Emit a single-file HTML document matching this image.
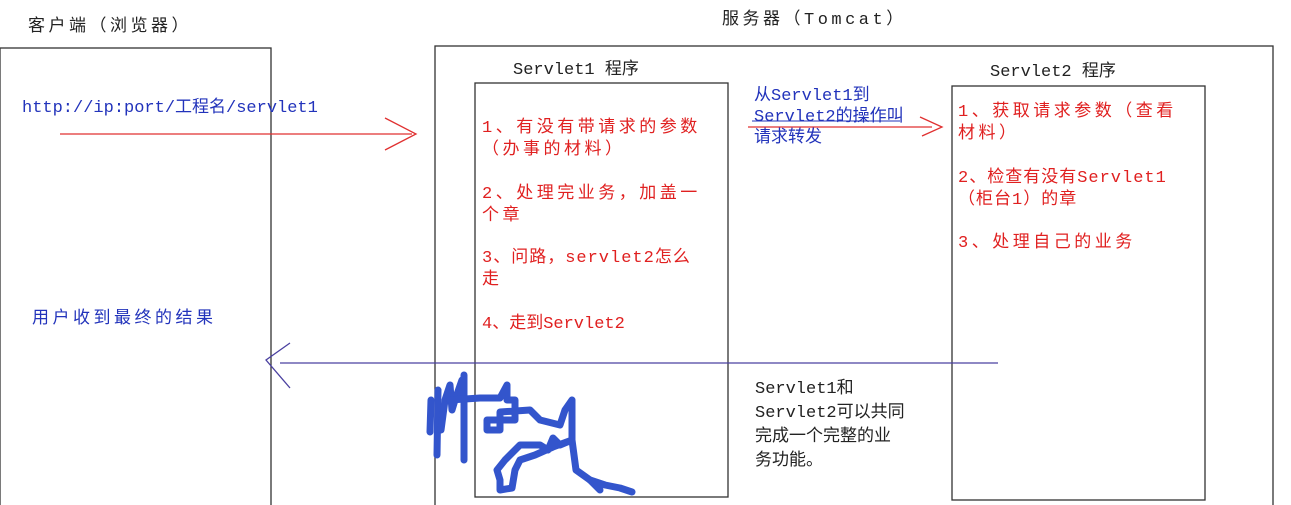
<!DOCTYPE html>
<html><head><meta charset="utf-8"><style>
body{margin:0;width:1291px;height:505px;background:#fff;position:relative;overflow:hidden;font-family:"Liberation Mono","Noto Sans CJK SC",monospace;font-size:17px;}
.t{position:absolute;white-space:nowrap;line-height:21px;}
.r{color:#e02020}.b{color:#2233bb}.k{color:#222}
.s{letter-spacing:3.5px}
</style></head><body>
<svg width="1291" height="505" style="position:absolute;left:0;top:0">
<g fill="none" stroke="#333" stroke-width="1.3">
<rect x="0" y="48" width="271" height="470"/>
<rect x="435" y="46" width="838" height="470"/>
<rect x="475" y="83" width="253" height="414"/>
<rect x="952" y="86" width="253" height="414"/>
</g>
<g stroke="#e03030" stroke-width="1.3" fill="none">
<line x1="60" y1="134" x2="412" y2="134"/>
<polyline points="385,118 416,134 385,150"/>
<line x1="748" y1="127" x2="932" y2="127"/>
<polyline points="920,117 942,127 922,136"/>
</g>
<line x1="752" y1="121" x2="900" y2="121" stroke="#2233bb" stroke-width="1"/>
<g stroke="#4a40a0" stroke-width="1.3" fill="none">
<line x1="280" y1="363" x2="998" y2="363"/>
<polyline points="290,343 266,360 290,388"/>
</g>
<g stroke="#3355cc" stroke-width="7" fill="none" stroke-linecap="round" stroke-linejoin="round">
<polyline points="430,432 431,400"/>
<polyline points="437,455 438,390"/>
<polyline points="441,430 445,400 450,385 452,410 455,400 462,380 462,395"/>
<polyline points="464,375 464,460"/>
<polyline points="450,400 480,398 500,398 507,385 507,400 515,400 515,420 500,420 487,420 487,430 500,430 500,412 530,410 540,420 560,425 565,410 572,400 572,440 560,445 553,438 548,450 540,445 520,445 505,460 497,470 500,480 500,490 512,488 515,470 520,460 535,455 553,447 572,440 576,470 590,480 605,485 620,488 632,492"/>
<polyline points="590,480 600,490"/>
</g>
</svg>
<div class="t k s" style="left:28px;top:17px">客户端（浏览器）</div>
<div class="t k s" style="left:722px;top:10px">服务器（Tomcat）</div>
<div class="t k" style="left:513px;top:60px">Servlet1 程序</div>
<div class="t k" style="left:990px;top:62px">Servlet2 程序</div>
<div class="t b" style="left:22px;top:98px">http://ip:port/工程名/servlet1</div>
<div class="t r s" style="left:482px;top:118px;line-height:22px">1、有没有带请求的参数<br>（办事的材料）</div>
<div class="t r s" style="left:482px;top:184px;line-height:22px">2、处理完业务，加盖一<br>个章</div>
<div class="t r" style="left:482px;top:248px;line-height:22px;letter-spacing:1px">3、问路，servlet2怎么<br>走</div>
<div class="t r" style="left:482px;top:314px">4、走到Servlet2</div>
<div class="t b" style="left:754px;top:86px;line-height:21px">从Servlet1到<br>Servlet2的操作叫<br>请求转发</div>
<div class="t r s" style="left:958px;top:102px;line-height:22px">1、获取请求参数（查看<br>材料）</div>
<div class="t r" style="left:958px;top:168px;line-height:22px;letter-spacing:1px">2、检查有没有Servlet1<br>（柜台1）的章</div>
<div class="t r s" style="left:958px;top:233px">3、处理自己的业务</div>
<div class="t b s" style="left:32px;top:309px">用户收到最终的结果</div>
<div class="t k" style="left:755px;top:378px;line-height:24px">Servlet1和<br>Servlet2可以共同<br>完成一个完整的业<br>务功能。</div>
</body></html>
